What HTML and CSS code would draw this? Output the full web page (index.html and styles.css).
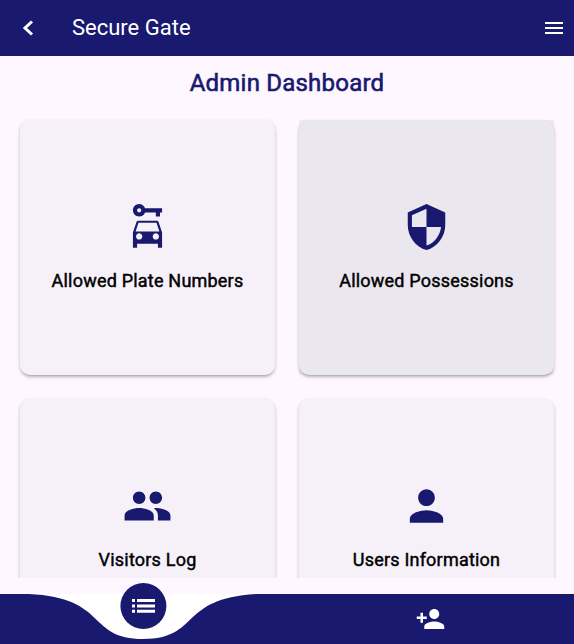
FILE: index.html
```html
<!DOCTYPE html>
<html lang="en">
<head>
<meta charset="utf-8">
<title>Secure Gate</title>
<link rel="stylesheet" href="styles.css">
</head>
<body>
<header class="app-bar">
  <svg class="back" viewBox="0 0 24 24"><path d="M16 5.500 9 12l7 6.500"/></svg>
  <span class="app-title">Secure Gate</span>
  <svg class="menu" viewBox="0 0 24 24"><path d="M3 18h18v-2H3v2zm0-5h18v-2H3v2zm0-7v2h18V6H3z"/></svg>
</header>
<main class="content">
  <h1 class="heading">Admin Dashboard</h1>
  <div class="grid">
    <div class="card">
      <svg class="icon" viewBox="0.24 0 24 24"><path d="M10.83 3C10.41 1.83 9.3 1 8 1 6.34 1 5 2.34 5 4s1.34 3 3 3c1.3 0 2.41-.84 2.83-2H16v2h2V5h1V3h-8.17zM8 5c-.55 0-1-.45-1-1s.45-1 1-1 1 .45 1 1-.45 1-1 1zM16.39 9H7.61c-.43 0-.81.28-.95.68L5 14.69V22h2v-2h10v2h2v-7.31l-1.66-5.01c-.14-.4-.52-.68-.95-.68zM7.670 9.900h8.660L17.700 14.100H6.300zM8 18c-.83 0-1.5-.67-1.5-1.5S7.17 15 8 15s1.5.67 1.5 1.5S8.83 18 8 18zm8 0c-.83 0-1.5-.67-1.5-1.5S15.17 15 16 15s1.5.67 1.5 1.5S16.83 18 16 18z" fill-rule="evenodd"/></svg>
      <span class="label">Allowed Plate Numbers</span>
    </div>
    <div class="card hovered">
      <svg class="icon" viewBox="0.24 0 24 24"><path d="M12 1 3 5v6c0 5.55 3.84 10.74 9 12 5.16-1.26 9-6.45 9-12V5l-9-4zm0 10.99h7c-.53 4.12-3.28 7.79-7 8.94V12H5V6.3l7-3.11v8.8z"/></svg>
      <span class="label">Allowed Possessions</span>
    </div>
    <div class="card">
      <svg class="icon" viewBox="0.24 0 24 24"><path d="M16 11c1.66 0 2.99-1.34 2.99-3S17.66 5 16 5s-3 1.34-3 3 1.34 3 3 3zm-8 0c1.66 0 2.99-1.34 2.99-3S9.66 5 8 5 5 6.34 5 8s1.34 3 3 3zm0 2c-2.33 0-7 1.17-7 3.5V19h14v-2.500c0-2.330-4.670-3.500-7-3.500zm8 0c-.29 0-.62.02-.97.05 1.160.84 1.970 1.970 1.970 3.450V19h6v-2.500c0-2.330-4.670-3.500-7-3.500z"/></svg>
      <span class="label">Visitors Log</span>
    </div>
    <div class="card">
      <svg class="icon" viewBox="0.24 0 24 24"><path d="M12 12c2.210 0 4-1.790 4-4s-1.790-4-4-4-4 1.790-4 4 1.790 4 4 4zm0 2c-2.670 0-8 1.340-8 4v2h16v-2c0-2.660-5.330-4-8-4z"/></svg>
      <span class="label">Users Information</span>
    </div>
  </div>
</main>
<nav class="nav">
  <svg class="nav-shape" viewBox="0 0 574 50"><path d="M0 0H28.700C109.060 3.750 86.100 45 143.500 45S177.940 3.750 258.300 0H574V50H0z"/></svg>
  <div class="nav-item">
    <span class="bubble"><svg class="nav-icon" viewBox="0.400 0 30 30"><path d="M4 8h3v3H4zM9 8h18v3H9zM4 13.400h3v3H4zM9 13.400h18v3H9zM4 18.800h3v3H4zM9 18.800h18v3H9z"/></svg></span>
  </div>
  <div class="nav-item">
    <svg class="nav-icon" viewBox="0.4 0 24 24"><path d="M15 12c2.210 0 4-1.790 4-4s-1.790-4-4-4-4 1.790-4 4 1.790 4 4 4zm-9-2V7H4v3H1v2h3v3h2v-3h3v-2H6zm9 4c-2.670 0-8 1.340-8 4v2h16v-2c0-2.660-5.330-4-8-4z"/></svg>
  </div>
</nav>
</body>
</html>
```
FILE: styles.css
```css
* { box-sizing: border-box; }

body {
  margin: 0;
  height: 644px;
  display: flex;
  flex-direction: column;
  overflow: hidden;
  background: #fef7ff;
  font-family: Roboto, sans-serif;
}

svg { display: block; flex: none; }

.app-bar {
  flex: none;
  height: 56px;
  padding: 0 8px 0 16px;
  display: flex;
  align-items: center;
  background: #191970;
  color: #fff;
  fill: #fff;
}

.back { width: 24px; height: 24px; fill: none; stroke: #fff; stroke-width: 3; }
.menu { width: 24px; height: 24px; }
.app-title { flex: 1; margin-left: 32px; font-size: 22px; line-height: 28px; }

.content {
  height: 522px;
  flex: none;
  overflow: hidden;
}

.heading {
  margin: 13px 0 23px;
  font-size: 24px;
  line-height: 28px;
  font-weight: 400;
  letter-spacing: 0.22px;
  text-align: center;
  color: #191970;
  -webkit-text-stroke: 0.6px #191970;
}

.grid {
  display: grid;
  grid-template-columns: 255px 255px;
  gap: 24px;
  padding-left: 20px;
}

.card {
  height: 255px;
  display: flex;
  flex-direction: column;
  align-items: center;
  justify-content: center;
  gap: 20px;
  border-radius: 10px;
  background: #f6f1f9;
  box-shadow: 0 3px 3px -2px rgba(0,0,0,.2), 0 2px 4px rgba(0,0,0,.14), 0 1px 3px rgba(0,0,0,.1);
}

.hovered { position: relative; z-index: 0; }

/* The hover tint is square: it does not follow the card's rounded corners. */
.hovered::after {
  content: "";
  position: absolute;
  z-index: -1;
  inset: 0;
  background: rgba(88, 105, 105, 0.07);
  pointer-events: none;
}

.icon { width: 50px; height: 50px; fill: #191970; }

.label {
  margin: -2px 0 2px;
  font-size: 18px;
  line-height: 21px;
  font-weight: 400;
  letter-spacing: 0.21px;
  color: #000;
  -webkit-text-stroke: 0.45px #000;
}

.nav {
  position: relative;
  flex: none;
  height: 50px;
  margin-top: 16px;
  display: flex;
  background: #fff;
}

.nav-shape { position: absolute; inset: 0; width: 574px; height: 50px; fill: #191970; }
.nav-item { position: relative; flex: 1; display: flex; justify-content: center; align-items: center; }
.nav-icon { width: 30px; height: 30px; fill: #fff; }
.bubble {
  position: relative;
  top: -13px;
  width: 46px;
  height: 46px;
  margin-right: 1px;
  border-radius: 50%;
  display: flex;
  align-items: center;
  justify-content: center;
  background: #191970;
  transform: translateX(0.4px);
}
```
